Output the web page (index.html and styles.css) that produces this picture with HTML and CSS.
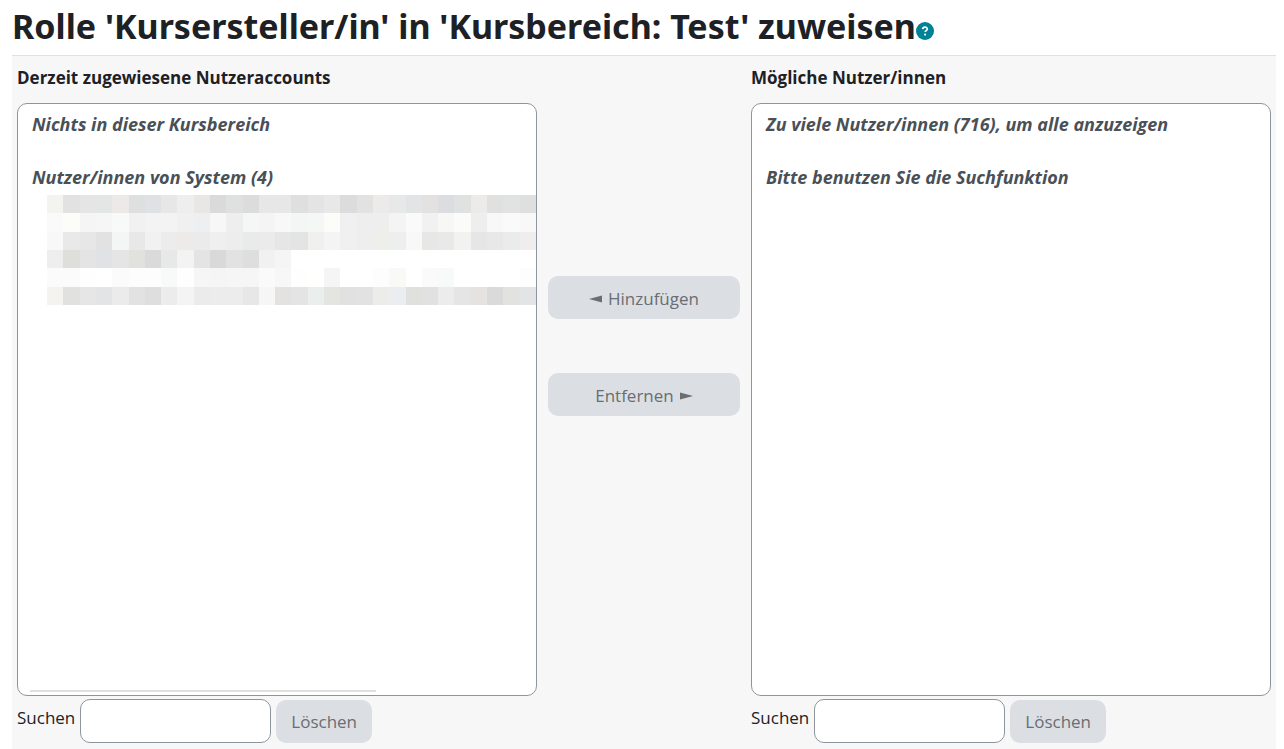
FILE: index.html
```html
<!DOCTYPE html>
<html lang="de">
<head>
    <meta charset="UTF-8">
    <meta name="viewport" content="width=device-width, initial-scale=1">
    <title>Rolle zuweisen</title>
    <link rel="stylesheet" href="styles.css">
</head>
<body>
    <header class="page-title">
        <h1>Rolle 'Kursersteller/in' in 'Kursbereich: Test' zuweisen</h1>
        <button type="button" class="help" aria-label="Hilfe">
            <svg viewBox="0 0 18 18" width="18" height="18" aria-hidden="true">
                <circle cx="9" cy="9" r="9" fill="#008196"/>
                <path d="M6.7 7.1C6.9 4.6 11.3 4.5 11.3 7c0 1.6-2.1 1.6-2.1 3.1" fill="none" stroke="#fff" stroke-width="1.7"/>
                <circle cx="9.1" cy="12.6" r="1.1" fill="#fff"/>
            </svg>
        </button>
    </header>

    <form class="assign">
        <section class="users">
            <label class="users-label" for="removeselect">Derzeit zugewiesene Nutzeraccounts</label>
            <div class="list">
                <select id="removeselect" multiple size="20">
                    <optgroup label="Nichts in dieser Kursbereich">
                        <option disabled></option>
                    </optgroup>
                    <optgroup label="Nutzer/innen von System (4)"></optgroup>
                </select>
                <svg class="masked" id="masked" viewBox="0 0 30 6" preserveAspectRatio="none" shape-rendering="crispEdges" aria-hidden="true"></svg>
                <div class="scrollbar"></div>
            </div>
            <div class="search">
                <label for="removesearch">Suchen</label>
                <input type="text" id="removesearch">
                <button type="button" class="btn" disabled>Löschen</button>
            </div>
        </section>

        <div class="actions">
            <button type="button" class="btn" disabled>
                <svg viewBox="0 0 14 8" width="14" height="8" aria-hidden="true"><path d="M0 4 13 0.5v7z" fill="currentColor"/></svg>
                Hinzufügen
            </button>
            <button type="button" class="btn" disabled>
                Entfernen
                <svg viewBox="0 0 14 8" width="14" height="8" aria-hidden="true"><path d="M14 4 1 0.5v7z" fill="currentColor"/></svg>
            </button>
        </div>

        <section class="users">
            <label class="users-label" for="addselect">Mögliche Nutzer/innen</label>
            <div class="list">
                <select id="addselect" multiple size="20">
                    <optgroup label="Zu viele Nutzer/innen (716), um alle anzuzeigen">
                        <option disabled></option>
                    </optgroup>
                    <optgroup label="Bitte benutzen Sie die Suchfunktion"></optgroup>
                </select>
            </div>
            <div class="search">
                <label for="addsearch">Suchen</label>
                <input type="text" id="addsearch">
                <button type="button" class="btn" disabled>Löschen</button>
            </div>
        </section>
    </form>

    <script>
        // shades of the masked user names, one string per row
        const rows = [
            'f3f3f0 e2e2e2 e5e5e5 e4e6e5 ede9e8 dde0df e0e1e4 e7e7e7 eeeeee e8e7e5 dadada dfe1e0 dcdcdc e7e7e7 e7e7e7 dfdfdf e4e4e4 e8e8e8 dcdcdc e2e2e2 ecebe9 e7e9e8 e2e4e6 e4e2e0 dcdde1 e0e1e1 ecebe9 e0e0e0 e0e3e2 dfdfdf',
            'fafafa fcfcf9 f5f5f5 f6f6f6 f8f9f9 f1f1f1 f3f3f3 f3f3f3 f0f0f0 eeeff1 f7f7f7 eeeeee f5f7f6 f4f4f4 f8f8f8 f4f6f5 f5f6f6 fcfcf9 f0f0f0 eeeeee eeeeee f4f4f4 fafafa f1f1f1 f7f7f6 fbfbf9 eeeeee f8f8f8 fafafa f8f8f8',
            'f8f8f8 e9e9e9 e7e7e7 e2e2e2 f3f6f5 e8e8e8 f1f1f1 ececec edebe9 ebebeb efefef ededed e9ebea ebebeb e6e6e6 e4e4e4 f0f0ee f4f4f4 f0f0f0 eeeeee eeeeeb ecefee f8f8f8 e7e7e5 e9e9e9 f2f2f0 e6e6e6 e8e8e8 e9ecea f0eeec',
            'eeeeee dededb e4e4e4 e1e2e5 e5e5e5 e1e1de dadada e7e9e8 f3f3f3 e4e4e4 d9d9d9 e2e2e2 dedede f1f1f1 f5f5f5 ffffff ffffff ffffff ffffff ffffff ffffff ffffff ffffff ffffff ffffff ffffff ffffff ffffff ffffff ffffff',
            'fbfbfb fbfbfb fefefe ffffff fbfbfb fdfdfd fdfdfd f8f9f9 fefefe f6f6f6 f5f5f5 f6f6f6 f6f6f6 fafafa f7f7f7 fefefe fffffd f5f5f5 ffffff ffffff fdfdfd f9f9f8 ffffff fafafa f8faf9 ffffff ffffff ffffff ffffff fdfdfd',
            'f4f3f0 e1e1df e6e6e6 e2e4e6 ebebeb e2e2e2 dedede ececec f4f4f4 ebebeb ececec ececec e7e7e7 f6f6f6 e3e2e0 e4e4e4 eaeeed e4e4e1 e1e1e1 e2e2e2 ececea ecedf0 e0e0de e1e1e1 ececec e5e5e5 e4e3e1 dadada e2e2e0 e3e4e6'
        ];
        const masked = document.getElementById('masked');

        rows.forEach((row, y) => {
            row.split(' ').forEach((color, x) => {
                const cell = document.createElementNS('http://www.w3.org/2000/svg', 'rect');
                cell.setAttribute('x', x);
                cell.setAttribute('y', y);
                cell.setAttribute('width', 1);
                cell.setAttribute('height', 1);
                cell.setAttribute('fill', '#' + color);
                masked.appendChild(cell);
            });
        });
    </script>
</body>
</html>
```
FILE: styles.css
```css
* {
    box-sizing: border-box;
}

body {
    margin: 0;
    padding: 0 8px 0 12px;
    font-family: "Open Sans", "Noto Sans", sans-serif;
    font-size: 17px;
    line-height: 26px;
    color: #1d2125;
    background-color: #fff;
}

button,
input,
select {
    font: inherit;
}

.page-title {
    display: flex;
    align-items: center;
    padding-bottom: 2px;
}

.page-title h1 {
    margin: 0;
    font-family: "Noto Sans", sans-serif;
    font-size: 34px;
    line-height: 53px;
    font-weight: bold;
}

.help {
    display: flex;
    margin-top: 8px;
    padding: 0;
    border: none;
    background: none;
    cursor: pointer;
}

.assign {
    display: grid;
    grid-template-columns: 1fr 192px 1fr;
    gap: 11px;
    padding: 9px 5px 6px;
    border-top: 1px solid #dee2e6;
    background-color: #f7f7f7;
}

.users {
    min-width: 0;
}

.users-label {
    display: block;
    margin-bottom: 12px;
    font-weight: bold;
}

.list {
    position: relative;
}

.list select {
    display: block;
    width: 100%;
    height: 593px;
    padding: 8px 12px;
    border: 1px solid #8f959e;
    border-radius: 10px;
    font-size: 18px;
    color: #495057;
    background-color: #fff;
    overflow: hidden;
}

.list optgroup {
    font-style: italic;
    font-weight: bold;
}

.list option {
    height: 28px;
}

.masked {
    position: absolute;
    top: 92px;
    left: 30px;
    width: calc(100% - 31px);
    height: 110px;
}

.scrollbar {
    position: absolute;
    left: 13px;
    bottom: 4px;
    width: 346px;
    height: 2px;
    background-color: #dfe1e1;
}

.search {
    display: flex;
    align-items: center;
    gap: 5px;
    margin-top: 3px;
}

.search label {
    margin-bottom: 6px;
}

.search input {
    width: 191px;
    height: 44px;
    padding: 6px 12px;
    border: 1px solid #8f959e;
    border-radius: 10px;
    background-color: #fff;
}

.btn {
    height: 43px;
    padding: 2px 15px 0;
    border: none;
    border-radius: 10px;
    color: #6a6d71;
    background-color: #dbdfe4;
}

.actions {
    display: flex;
    flex-direction: column;
    gap: 54px;
    padding-top: 211px;
}

.actions .btn {
    display: flex;
    align-items: center;
    justify-content: center;
    gap: 5px;
}
```
